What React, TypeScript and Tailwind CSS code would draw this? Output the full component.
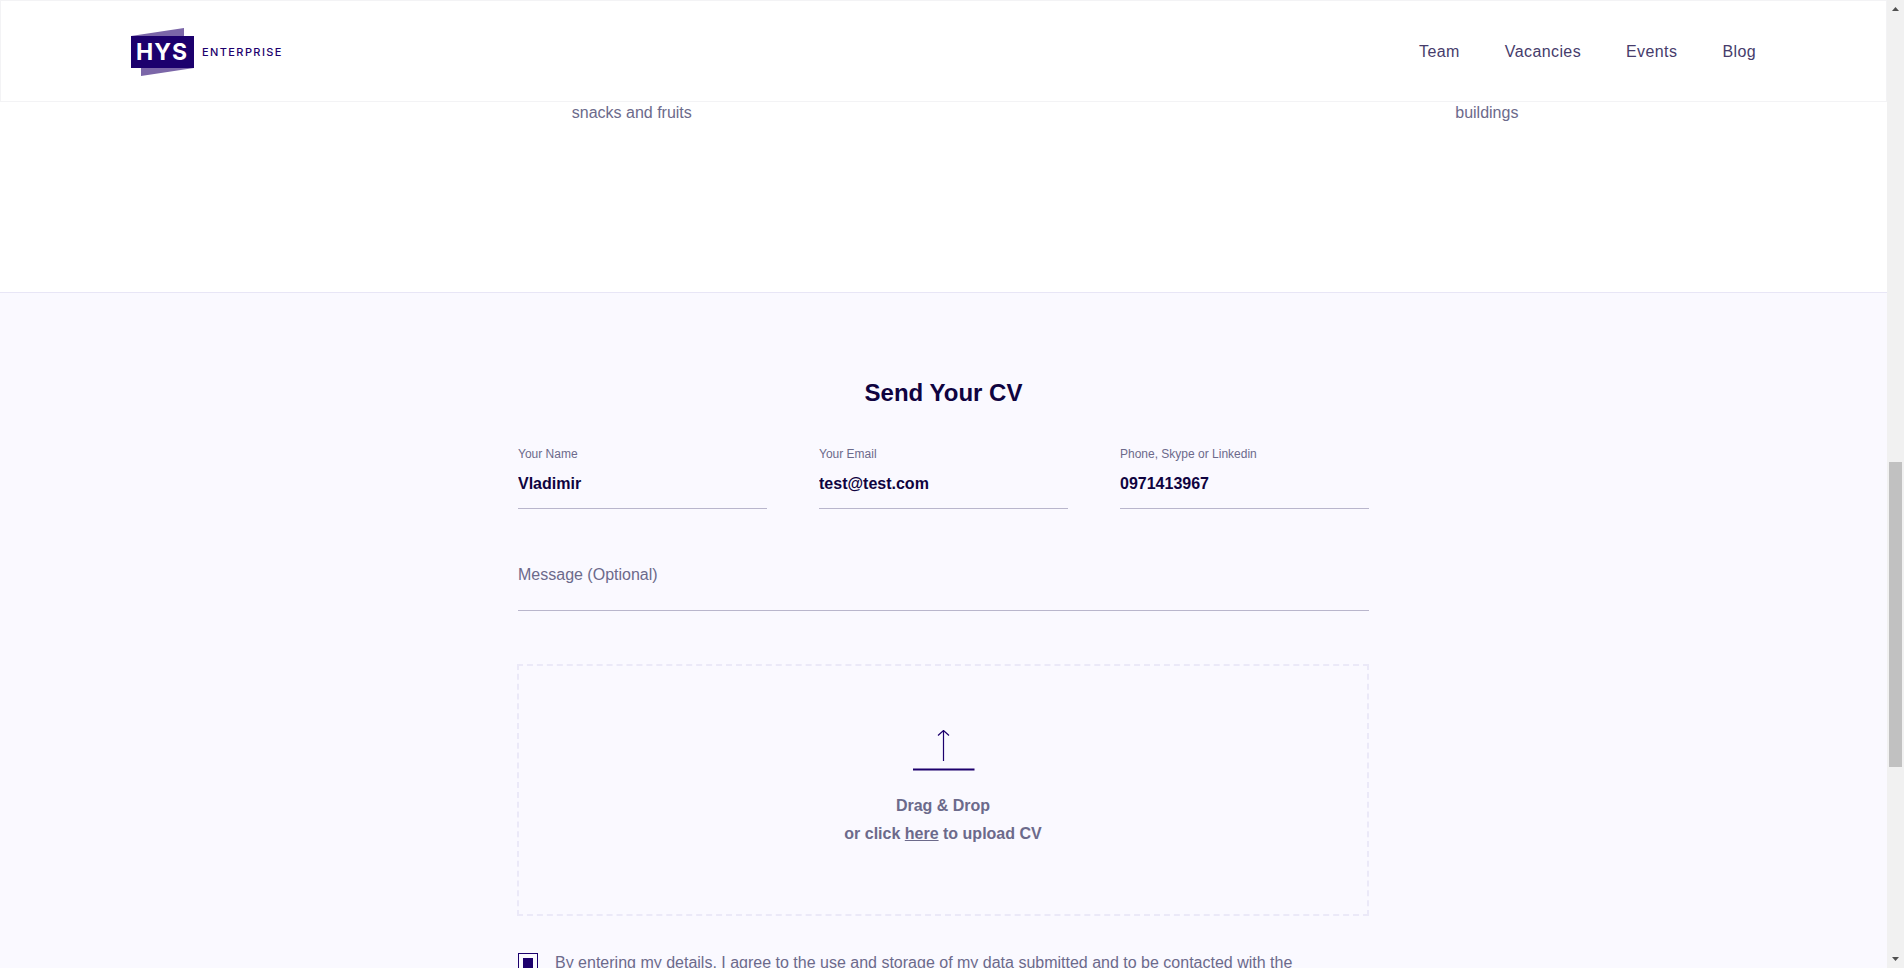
import React, { useState } from "react";

const navItems = ["Team", "Vacancies", "Events", "Blog"];

function Logo() {
  return (
    <a href="#home" aria-label="HYS Enterprise">
      <svg width="160" height="48" viewBox="0 0 160 48" className="block">
        <path d="M0 8 53 0V8ZM10 40V48L63 40Z" fill="#7b66a8" />
        <rect y="8" width="63" height="32" fill="#1c006d" />
        <text x="5" y="32" fill="#fff" fontFamily="Inter, sans-serif" fontSize="23" fontWeight="700" letterSpacing="1">
          HYS
        </text>
        <text x="71" y="28" fill="#1c006d" fontFamily="Inter, sans-serif" fontSize="11" fontWeight="500" letterSpacing="1.4">
          ENTERPRISE
        </text>
      </svg>
    </a>
  );
}

function Header() {
  return (
    <header className="flex h-[102px] shrink-0 items-center justify-between border border-[#f3f3f5] bg-white px-[130px] pt-0.5">
      <Logo />
      <nav className="flex gap-[45px] text-base leading-6 tracking-wide text-[#463c6b]">
        {navItems.map((item) => (
          <a key={item} href={"#" + item.toLowerCase()}>
            {item}
          </a>
        ))}
      </nav>
    </header>
  );
}

function Field({ id, label, type, initial }: { id: string; label: string; type: string; initial: string }) {
  const [value, setValue] = useState(initial);
  return (
    <div className="flex min-w-0 flex-col gap-[10px]">
      <label htmlFor={id} className="text-xs leading-4 text-[#6c6a8b]">
        {label}
      </label>
      <input
        id={id}
        type={type}
        value={value}
        onChange={(e) => setValue(e.target.value)}
        className="block w-full border-b border-[#b9b6cc] bg-transparent pb-3 text-base leading-6 font-bold text-[#0f0340] outline-none"
      />
    </div>
  );
}

function UploadBox() {
  return (
    <div className="mt-[53px] -ml-px flex h-[252px] flex-col items-center border-2 border-dashed border-[#ebe9f8] pt-16">
      <svg width="63" height="42" viewBox="0 0 63 42" fill="none" stroke="#1c006d">
        <path d="M31.500 0V31M26 5.500 31.500 .5 37 5.500" strokeWidth="1.200" />
        <path d="M1 39.500H62.500" strokeWidth="2" />
      </svg>
      <p className="mt-5 text-center text-base leading-7 font-bold text-[#6c6a8b]">
        Drag &amp; Drop
        <br />
        or click{" "}
        <label htmlFor="cv" className="cursor-pointer underline">
          here
        </label>{" "}
        to upload CV
      </p>
      <input id="cv" type="file" className="sr-only" />
    </div>
  );
}

function CvForm() {
  return (
    <section className="grow border-t border-[#e8e6f6] bg-[#faf9ff] pt-[84px]">
      <form className="mx-auto max-w-[851px]">
        <h2 className="text-center text-2xl leading-8 font-bold text-[#0f0340]">Send Your CV</h2>
        <div className="mt-[37px] grid grid-cols-3 gap-[52px]">
          <Field id="name" label="Your Name" type="text" initial="Vladimir" />
          <Field id="email" label="Your Email" type="email" initial="test@test.com" />
          <Field id="contact" label="Phone, Skype or Linkedin" type="text" initial="0971413967" />
        </div>
        <textarea
          rows={1}
          aria-label="Message (Optional)"
          placeholder="Message (Optional)"
          className="mt-[54px] block w-full resize-none overflow-hidden border-b border-[#b9b6cc] bg-transparent pb-[23px] text-base leading-6 text-[#0f0340] outline-none placeholder:text-[#6c6a8b]"
        />
        <UploadBox />
        <div className="mt-[37px] flex items-start gap-[17px]">
          <input
            id="consent"
            type="checkbox"
            defaultChecked
            className="size-5 shrink-0 appearance-none border border-[#1c006d] bg-clip-content p-1 checked:bg-[#1c006d]"
          />
          <label htmlFor="consent" className="text-base leading-5 text-[#6c6a8b]">
            By entering my details, I agree to the use and storage of my data submitted and to be contacted with the
          </label>
        </div>
      </form>
    </section>
  );
}

function ScrollRail() {
  return (
    <div aria-hidden="true" className="flex w-[17px] shrink-0 flex-col items-center bg-[#f1f1f1] py-[7px]">
      <svg width="7" height="4" viewBox="0 0 7 4" fill="#505050">
        <path d="M0 4 3.500 0 7 4Z" />
      </svg>
      <div className="grow-[451]" />
      <div className="w-[13px] grow-[305] bg-[#c1c1c1]" />
      <div className="grow-[190]" />
      <svg width="7" height="4" viewBox="0 0 7 4" fill="#505050">
        <path d="M0 0 3.500 4 7 0Z" />
      </svg>
    </div>
  );
}

export default function App() {
  return (
    <div className="flex h-screen overflow-hidden bg-white font-['Liberation_Sans',Arial,sans-serif]">
      <div className="flex min-w-0 grow flex-col overflow-hidden">
        <Header />
        <main className="flex min-h-0 grow flex-col">
          <section className="grid h-[190px] shrink-0 grid-cols-4 gap-[140px] px-[130px] pt-px text-base leading-5 text-[#6c6a8b]">
            <p className="col-start-2">snacks and fruits</p>
            <p className="col-start-4">buildings</p>
          </section>
          <CvForm />
        </main>
      </div>
      <ScrollRail />
    </div>
  );
}
